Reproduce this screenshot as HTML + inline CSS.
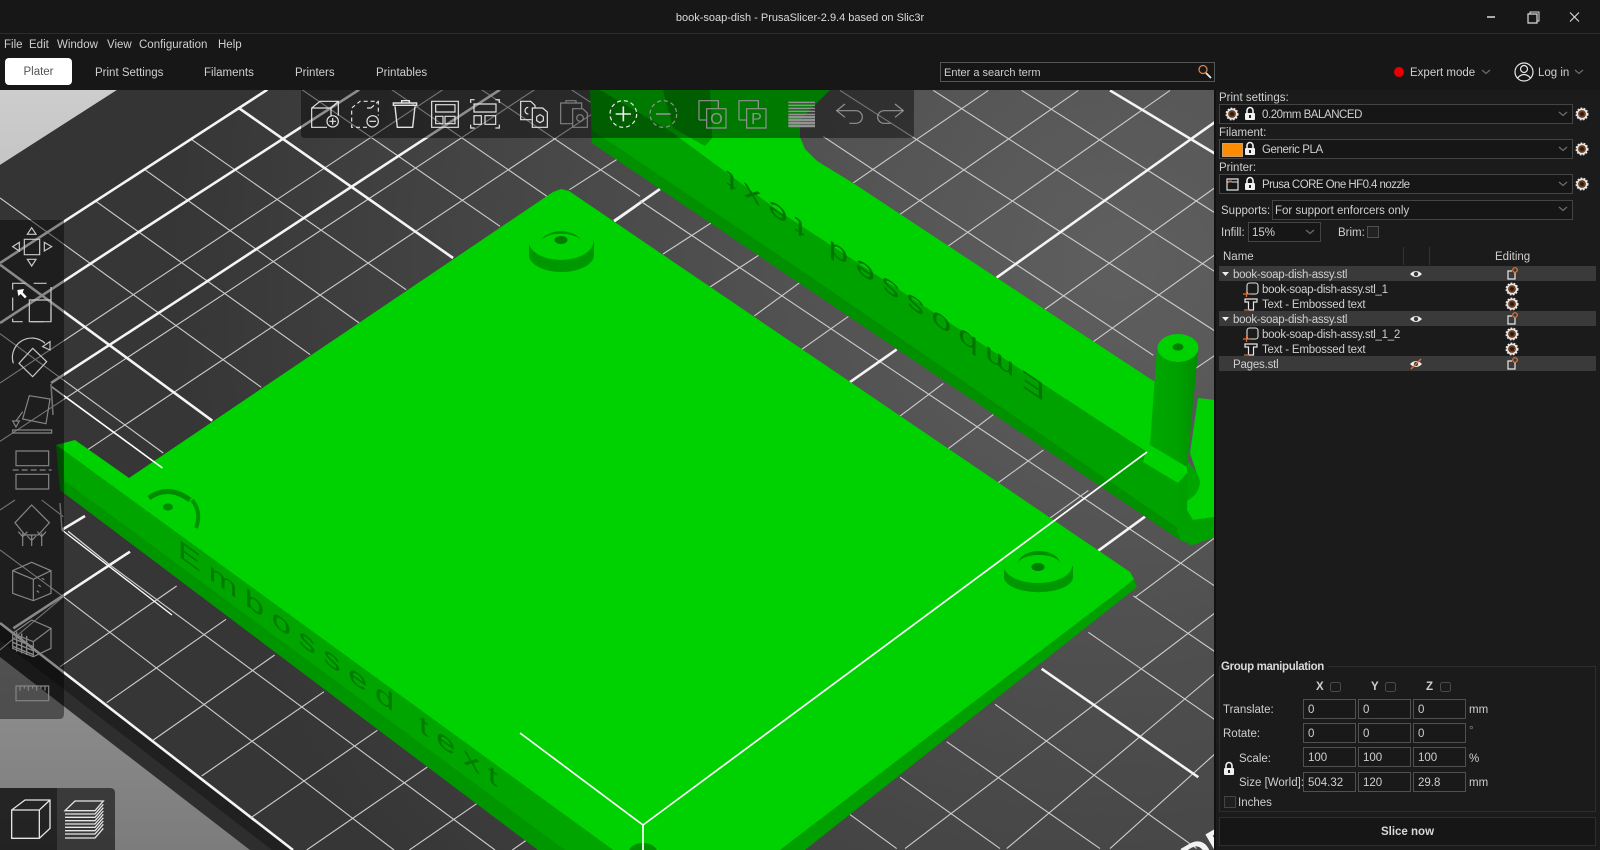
<!DOCTYPE html>
<html><head><meta charset="utf-8"><title>book-soap-dish - PrusaSlicer</title>
<style>
html,body{margin:0;padding:0;width:1600px;height:850px;overflow:hidden;background:#181818}
body{position:relative;font-family:"Liberation Sans",sans-serif;font-size:11.5px;color:#cfcfcf}
svg{position:absolute;left:0;top:0}
svg *{vector-effect:non-scaling-stroke}
.t{position:absolute;line-height:16px;white-space:nowrap;margin-top:1px}
.b{position:absolute;box-sizing:border-box}
.k{stroke:#f4f4f4;stroke-width:2.6;fill:none}
.n{stroke:#cdcdcd;stroke-width:1.1;fill:none}
.f{background:#161616;border:1px solid #444}
.v{position:absolute;box-sizing:border-box;background:#191919;border:1px solid #505050;height:20px;width:53px;line-height:20px;padding-left:4px;color:#cfcfcf}
.r{position:absolute;left:1219px;width:377px;height:15px;background:#3a3a3a}
.s{letter-spacing:-.2px}
</style></head><body>

<svg width="1600" height="850" viewBox="0 0 1600 850" style="z-index:1">
<defs>
<linearGradient id="bgg" x1="0" y1="90" x2="0" y2="850" gradientUnits="userSpaceOnUse"><stop offset="0" stop-color="#cdcdcd"/><stop offset="1" stop-color="#7c7c7c"/></linearGradient>
<radialGradient id="pg" cx="1120" cy="260" r="950" gradientUnits="userSpaceOnUse"><stop offset="0" stop-color="#5f5f5f"/><stop offset=".6" stop-color="#484848"/><stop offset="1" stop-color="#363636"/></radialGradient>
<linearGradient id="peg" x1="1150" x2="1198" y1="0" y2="0" gradientUnits="userSpaceOnUse"><stop offset="0" stop-color="#00a800"/><stop offset=".6" stop-color="#00a000"/><stop offset="1" stop-color="#008c00"/></linearGradient>
</defs>
<rect x="0" y="90" width="1215" height="760" fill="url(#bgg)"/>
<!-- bed -->
<polygon points="117,90 1215,90 1215,850 293,850 0,623 0,165" fill="url(#pg)"/>
<polygon points="117,90 268,90 0,262 0,165" fill="#343434"/>
<polygon points="0,623 293,850 250,850 0,657" fill="#2e2e2e"/>
<polygon points="0,623 293,850 272,850 0,640" fill="#202020"/>
<path d="M0 623L293 850" class="k" stroke-width="3"/>
<!-- grid left -->
<g transform="translate(0,88) scale(.40816,.33333)">
<path class="n" d="M1085 5L0 885M1310 5L0 1060M1540 5L215 1085M1568 170L1395 305M470 155L995 605M355 245L880 705M235 340L760 800M0 330L640 898M0 737L400 1095M740 5L1225 415M960 5L1340 325M1180 5L1568 325M1400 5L1568 140"/>
<path class="k" d="M655 5L0 525M880 5L690 155L340 432L0 705M1225 5L975 205L510 578L125 885M585 60L1110 510M0 530L520 998M1568 345L1505 400"/>
</g>
<path class="n" d="M663 254L711 223M710 287L759 255"/>
<path class="k" d="M614 221L660 189"/>
<!-- grid lower-left -->
<g transform="translate(0,500) scale(.33333)">
<path class="n" d="M180 500L530 258M320 608L678 358M460 720L824 465M605 828L972 575M750 955L1132 691M920 1050L1282 801M1228 1050L1430 911M1537 1050L1580 1020M190 290L1182 1050M330 195L1485 1050M0 150L190 290M0 30L45 0M125 0L190 50M205 95L330 195M0 450L190 290"/>
<path class="k" d="M40 385L390 155M185 90L255 48"/>
</g>
<!-- grid right -->
<g transform="translate(780,88) scale(.33333,.486)">
<path class="n" d="M625 5L220 195M895 5L360 260M1170 5L505 325M1305 205L795 455M1305 343L940 522M1305 550L1090 650M180 5L1305 500M460 5L1305 378M725 5L1305 257M130 100L1120 550M-77 469L60 400M65 538L205 470M360 675L490 608M505 742L640 672M655 812L790 745M810 885L925 828M-420 232L1305 1025M1305 1080L375 1565M1305 1205L680 1565M1305 1370L990 1565M1305 925L1065 1048M1060 1045L1305 1160M925 1120L1305 1300M645 1268L1250 1565M500 1345L960 1565M360 1418L660 1565M210 1495L350 1565"/>
<path class="k" d="M1305 70L650 390M990 5L1305 135M210 605L350 538M955 952L1095 882M785 1195L1255 1418"/>
</g>
<text transform="matrix(.86,-.5,.5,.86,1192,874)" font-family="Liberation Sans" font-weight="bold" font-size="40" fill="#f2f2f2">DR</text>

<!-- upper object -->
<polygon points="590,90 592,143 780,270 1180,540 1193,545 1215,537 1215,500 1187,472 1147,452 780,212 670,131 600,90" fill="#00a200"/>
<polygon points="592,130 592,143 780,270 1180,540 1178,528 780,256" fill="#009000"/>
<polygon points="600,90 830,90 800,120 800,137 805,149 817,161 853,183 997,278 1152,380 1190,400 1187,472 1147,452 1043,384 780,212 670,131" fill="#00d100"/>
<polygon points="663,90 710,90 712,138 705,146 673,128" fill="#00a000"/>
<polygon points="1215,400 1198,398 1190,453 1200,483 1188,500 1183,510 1193,520 1215,517" fill="#00d100"/>
<polygon points="1178,483 1188,472 1187,510 1193,520 1215,517 1215,537 1190,545 1177,533" fill="#00a000"/>
<path d="M1188 462Q1200 475 1200 483Q1198 495 1188 500Z" fill="#00a600"/>
<polygon points="1147,447 1188,472 1178,483 1143,462" fill="#00d100"/>
<polygon points="1157,348 1150,445 1187,467 1198,352" fill="url(#peg)"/>
<ellipse cx="1178" cy="348" rx="20.500" ry="14" fill="#00d100"/>
<ellipse cx="1178" cy="347" rx="5.500" ry="3.600" fill="#008000"/>
<text transform="matrix(-1.41,-.95,0,-1,1045,385)" font-family="Liberation Sans" font-size="25" fill="#007800" textLength="226" lengthAdjust="spacing">Embossed text</text>

<!-- main plate -->
<polygon points="1127,585 1134,579 1137,587 805,850 780,850" fill="#00a000"/>
<polygon points="63,450 60,490 538,850 613,850" fill="#00a500"/>
<polygon points="60,490 538,850 565,850 66,482" fill="#009600"/>
<polygon points="56,445 63,450 65,493 60,490" fill="#008800"/>
<polygon points="56,445 75,440 129,478 553,192 561,189 569,191 1130,572 1134,579 1127,585 780,850 613,850 63,450" fill="#00d100"/>
<text transform="matrix(1.377,.998,0,1,178,556)" font-family="Liberation Sans" font-size="25" fill="#007c00" textLength="232" lengthAdjust="spacing">Embossed text</text>

<!-- washers -->
<g>
<path d="M529 241V255A32.500 17 0 0 0 594 255V241Z" fill="#009800"/>
<ellipse cx="561" cy="241" rx="32.500" ry="19" fill="#00d100"/>
<path d="M541 240A22 15 0 0 1 581 240A22 11 0 0 0 541 240Z" fill="#009000"/>
<ellipse cx="561" cy="240" rx="6.500" ry="4" fill="#007c00"/>
<path d="M1004 566V577A34 15 0 0 0 1073 577V566Z" fill="#009800"/>
<ellipse cx="1038" cy="566" rx="34" ry="17" fill="#00d100"/>
<path d="M1018 564A21 13 0 0 1 1060 564A21 9 0 0 0 1018 564Z" fill="#009000"/>
<ellipse cx="1038" cy="567" rx="6.500" ry="4" fill="#007c00"/>
<path d="M149 498Q168 484 190 500" fill="none" stroke="#008c00" stroke-width="5"/>
<path d="M192 500Q202 512 196 528" fill="none" stroke="#009400" stroke-width="4"/>
<ellipse cx="168" cy="507" rx="5" ry="3.500" fill="#008a00"/>
<ellipse cx="643" cy="852" rx="14" ry="9" fill="#009000"/>
</g>
<!-- white axis lines -->
<g transform="translate(0,88) scale(.40816,.33333)"><path d="M125 895L398 1140" stroke="#fff" stroke-width="1.600" fill="none"/></g>
<path d="M51 384L53 415" stroke="#ccc" stroke-width="1.600"/>
<path d="M62 530L172 615" stroke="#fff" stroke-width="1.300" fill="none"/>
<path d="M68 531L110 565" stroke="#ddd" stroke-width="1" fill="none"/>
<path d="M60 503L62 530" stroke="#bbb" stroke-width="1.500" fill="none"/>
<path d="M520 733L643 825L1147 452M643 825V850" stroke="#fff" stroke-width="1.700" fill="none"/>

<!-- overlays -->
<path d="M301 90H914V134Q914 138 910 138H305Q301 138 301 134Z" fill="#000" fill-opacity=".42"/>
<path d="M0 220H64V714Q64 719 59 719H0Z" fill="#000" fill-opacity=".44"/>
<path d="M0 788H57V850H0Z" fill="#000" fill-opacity=".72"/>
<path d="M57 788H110Q115 788 115 793V850H57Z" fill="#000" fill-opacity=".55"/>

<!-- top toolbar icons -->
<g transform="translate(300,88) scale(.33333)" fill="none" stroke="#e2e2e2" stroke-width="1.200">
<path d="M81 118H35V60L60 40H115V83M35 60H93V85M93 60L115 40"/>
<circle cx="98" cy="100" r="17"/><path d="M98 90V110M88 100H108"/>
<path stroke-dasharray="4 3" d="M201 118H155V60L180 40H235V83M213 60H193M213 60L235 40"/>
<circle cx="218" cy="100" r="17"/><path d="M208 100H228"/>
<path stroke-width="1.400" d="M280 45H350V52H280ZM305 45V38H328V45M285 55L292 118H338L345 55"/>
<rect x="395" y="40" width="80" height="78"/><rect x="407" y="50" width="58" height="22"/><rect x="407" y="85" width="22" height="22"/><rect x="435" y="85" width="30" height="22"/>
<path d="M512 45V35H524M586 35H598V45M512 110V120H524M586 120H598V110"/><rect x="522" y="48" width="66" height="24"/><rect x="522" y="83" width="22" height="26"/><rect x="555" y="83" width="32" height="26"/>
<path d="M695 95H662V40H692L705 52V60"/><path d="M685 58A10 10 0 0 0 685 78"/>
<path d="M697 60H728L742 72V118H697Z"/><path d="M720 80L730 86V98L720 104L710 98V86Z"/>
<g stroke="#808080"><path d="M818 107H782V45H798V38H828V45H845V60M798 45H828"/><path d="M818 62H848L862 75V118H818Z"/><circle cx="840" cy="90" r="10"/></g>
</g>
<g transform="translate(600,88) scale(.33333)" fill="none" stroke="#ececec" stroke-width="1.200">
<circle cx="70" cy="78" r="40" stroke-dasharray="4 3"/><path d="M70 55V100M47 78H93" stroke-width="1.600"/>
<g stroke="#929292"><circle cx="190" cy="78" r="40" stroke-dasharray="4 3"/><path d="M168 78H212" stroke-width="1.600"/>
<path d="M297 96V38H355V62M320 62H378V120H320Z"/><path d="M297 96H320"/>
<path d="M417 96V38H475V62M440 62H498V120H440Z"/><path d="M417 96H440"/>
<path d="M565 43H645M565 52H645M565 61H645M565 70H645M565 79H645" stroke-width="1.500"/><path d="M565 87H645M565 96H645M565 105H645M565 114H645" stroke-width="2.600"/>
<path d="M735 48L710 68L735 88M710 68H768A19 19 0 0 1 768 106H748"/>
<path d="M885 48L910 68L885 88M910 68H852A19 19 0 0 0 852 106H872"/></g>
</g>
<text x="716.500" y="124" text-anchor="middle" font-family="Liberation Sans" font-size="16" fill="#929292">O</text>
<text x="756.500" y="124" text-anchor="middle" font-family="Liberation Sans" font-size="16" fill="#929292">P</text>

<!-- left toolbar icons -->
<g transform="translate(0,215) scale(.33333)" fill="none" stroke="#c8c8c8" stroke-width="1.200">
<rect x="73" y="73" width="46" height="46"/><path d="M82 58L95 38L108 58ZM82 133L95 153L108 133ZM58 82L38 95L58 108ZM133 82L155 95L133 108Z"/>
<rect x="38" y="205" width="115" height="115" stroke-dasharray="13 8"/><rect x="88" y="255" width="65" height="65"/>
<path d="M52 225L72 222L68 232L80 245L75 250L62 237L55 243Z" fill="#fff" stroke="none"/>
<path d="M98 400L140 440L98 485L57 445Z"/><path d="M40 445A58 58 0 0 1 135 385"/><path d="M150 380L128 395L150 405Z"/>
<g stroke="#858585"><path d="M88 542L150 552L138 626L68 612Z"/><rect x="38" y="645" width="117" height="9"/><path d="M38 618H58L48 636ZM48 618L68 590"/>
<rect x="48" y="708" width="98" height="44"/><path d="M38 765H155" stroke-dasharray="6 3"/><rect x="48" y="778" width="98" height="44"/></g>
</g>
<g transform="translate(0,500) scale(.33333)" fill="none" stroke="#858585" stroke-width="1.200">
<path d="M95 15L148 68L115 105H75L45 68ZM68 100V138M95 105V138M125 100V138M55 95L68 110L82 95M82 108L95 122L108 108M112 95L125 110L138 95"/>
<path d="M95 187L153 212V280L100 302L38 280V212ZM38 212L100 238L153 212M100 238V302"/><path d="M125 235L135 240M115 255L125 262M110 272L118 278" stroke-dasharray="3 2"/>
<path d="M95 360L153 385V445L100 470L38 445V400ZM38 400L100 425L153 385M100 425V470"/>
<path d="M38 415L100 440M38 427L100 452M38 439L100 464M50 395V455M65 400V460M80 408V465" stroke-width="1.400"/>
<rect x="48" y="558" width="98" height="44"/><path d="M60 558V572M73 558V566M85 558V572M98 558V566M110 558V572M123 558V566M135 558V572"/>
</g>
<g transform="translate(0,500) scale(.33333)" fill="none" stroke="#e6e6e6" stroke-width="1.300">
<path d="M35 930L75 900H150V985L118 1015H35ZM35 930H118V1015M118 930L150 900"/>
<path d="M195 932L225 903H310L285 932ZM195 932H285L310 903M195 942H285L310 913M195 952H285L310 923M195 962H285L310 933M195 972H285L310 943M195 982H285L310 953M195 992H285L310 963M195 1002H285L310 973M195 1014H285L310 985"/>
</g>
</svg>

<!-- Chrome -->
<div class="b" style="z-index:2;left:0;top:0;width:1600px;height:34px;background:#171717;border-bottom:1px solid #2c2c2c"></div>
<div class="b" style="z-index:2;left:0;top:34px;width:1600px;height:56px;background:#171717"></div>
<div class="b" style="z-index:2;left:1215px;top:90px;width:385px;height:760px;background:#1b1b1b"></div>
<div class="b" style="z-index:2;left:1214px;top:90px;width:2px;height:760px;background:#111"></div>

<div style="position:absolute;left:0;top:0;z-index:3;width:1600px;height:850px">
<div class="t" style="left:0;width:1600px;text-align:center;top:9px;font-size:11px;color:#dcdcdc">book-soap-dish - PrusaSlicer-2.9.4 based on Slic3r</div>
<span class="t" style="left:4px;top:36px">File</span><span class="t" style="left:29px;top:36px">Edit</span><span class="t" style="left:57px;top:36px">Window</span><span class="t" style="left:107px;top:36px">View</span><span class="t" style="left:139px;top:36px">Configuration</span><span class="t" style="left:218px;top:36px">Help</span>
<div class="b" style="left:5px;top:58px;width:67px;height:27px;background:#fff;border-radius:4px;color:#555;text-align:center;line-height:28px">Plater</div>
<span class="t" style="left:95px;top:64px">Print Settings</span><span class="t" style="left:204px;top:64px">Filaments</span><span class="t" style="left:295px;top:64px">Printers</span><span class="t" style="left:376px;top:64px">Printables</span>
<div class="b f" style="left:940px;top:62px;width:275px;height:20px;border-color:#555"></div>
<span class="t" style="left:944px;top:64px;font-size:11px">Enter a search term</span>
<span class="t" style="left:1410px;top:64px">Expert mode</span><span class="t" style="left:1538px;top:64px">Log in</span>

<span class="t" style="left:1219px;top:89px">Print settings:</span>
<div class="b f" style="left:1219px;top:104px;width:354px;height:20px"></div><span class="t" style="left:1262px;top:106px;letter-spacing:-.45px">0.20mm BALANCED</span>
<span class="t" style="left:1219px;top:124px">Filament:</span>
<div class="b f" style="left:1219px;top:139px;width:354px;height:20px"></div><span class="t" style="left:1262px;top:141px;letter-spacing:-.4px">Generic PLA</span>
<div class="b" style="left:1222px;top:143px;width:21px;height:14px;background:#ff8c00;border:1px solid #c9a070"></div>
<span class="t" style="left:1219px;top:159px">Printer:</span>
<div class="b f" style="left:1219px;top:174px;width:354px;height:20px"></div><span class="t" style="left:1262px;top:176px;letter-spacing:-.55px">Prusa CORE One HF0.4 nozzle</span>
<span class="t" style="left:1221px;top:202px">Supports:</span>
<div class="b f" style="left:1272px;top:200px;width:301px;height:20px"></div><span class="t" style="left:1275px;top:202px">For support enforcers only</span>
<span class="t" style="left:1221px;top:224px">Infill:</span>
<div class="b f" style="left:1248px;top:222px;width:73px;height:20px"></div><span class="t" style="left:1252px;top:224px">15%</span>
<span class="t" style="left:1338px;top:224px">Brim:</span>
<div class="b" style="left:1367px;top:226px;width:12px;height:12px;border:1px solid #4e4e4e;background:#222"></div>

<span class="t" style="left:1223px;top:248px">Name</span><span class="t" style="left:1495px;top:248px">Editing</span>
<div class="b" style="left:1403px;top:247px;width:1px;height:18px;background:#333"></div>
<div class="b" style="left:1429px;top:247px;width:1px;height:18px;background:#333"></div>
<div class="r" style="top:266px"></div><div class="r" style="top:311px"></div><div class="r" style="top:356px"></div>
<span class="t s" style="left:1233px;top:266px;letter-spacing:-.25px">book-soap-dish-assy.stl</span>
<span class="t s" style="left:1262px;top:281px;letter-spacing:-.28px">book-soap-dish-assy.stl_1</span>
<span class="t s" style="left:1262px;top:296px">Text - Embossed text</span>
<span class="t s" style="left:1233px;top:311px;letter-spacing:-.25px">book-soap-dish-assy.stl</span>
<span class="t s" style="left:1262px;top:326px;letter-spacing:-.28px">book-soap-dish-assy.stl_1_2</span>
<span class="t s" style="left:1262px;top:341px">Text - Embossed text</span>
<span class="t s" style="left:1233px;top:356px">Pages.stl</span>

<div class="b" style="left:1219px;top:666px;width:377px;height:146px;border:1px solid #2e2e2e"></div>
<span class="t" style="left:1221px;top:658px;font-weight:bold;background:#1b1b1b;padding-right:4px;color:#d8d8d8;letter-spacing:-.35px">Group manipulation</span>
<span class="t" style="left:1316px;top:678px;font-weight:bold">X</span><span class="t" style="left:1371px;top:678px;font-weight:bold">Y</span><span class="t" style="left:1426px;top:678px;font-weight:bold">Z</span>
<span class="t" style="left:1223px;top:701px">Translate:</span><span class="t" style="left:1223px;top:725px">Rotate:</span><span class="t" style="left:1239px;top:750px">Scale:</span><span class="t" style="left:1239px;top:774px">Size [World]:</span>
<div class="v" style="left:1303px;top:699px">0</div><div class="v" style="left:1358px;top:699px">0</div><div class="v" style="left:1413px;top:699px">0</div><span class="t" style="left:1469px;top:701px">mm</span>
<div class="v" style="left:1303px;top:723px">0</div><div class="v" style="left:1358px;top:723px">0</div><div class="v" style="left:1413px;top:723px">0</div><span class="t" style="left:1469px;top:722px;color:#888">°</span>
<div class="v" style="left:1303px;top:747px">100</div><div class="v" style="left:1358px;top:747px">100</div><div class="v" style="left:1413px;top:747px">100</div><span class="t" style="left:1469px;top:750px">%</span>
<div class="v" style="left:1303px;top:772px">504.32</div><div class="v" style="left:1358px;top:772px">120</div><div class="v" style="left:1413px;top:772px">29.8</div><span class="t" style="left:1469px;top:774px">mm</span>
<div class="b" style="left:1224px;top:796px;width:12px;height:12px;border:1px solid #444;background:#1f1f1f"></div>
<span class="t" style="left:1238px;top:794px">Inches</span>
<div class="b" style="left:1219px;top:817px;width:377px;height:29px;background:#161616;border:1px solid #2e2e2e;text-align:center;line-height:29px;font-weight:bold;color:#d8d8d8">Slice now</div>
</div>

<!-- chrome icons -->
<svg width="1600" height="850" viewBox="0 0 1600 850" style="z-index:4">
<defs>
<g id="gear"><circle r="5.500" fill="#e6e6e6"/><circle r="5.800" fill="none" stroke="#e6e6e6" stroke-width="1.400" stroke-dasharray="1.800 1.400"/><circle r="3.900" fill="#6e3d1e"/><circle r="1.900" fill="#2e1a0c"/></g>
<g id="lock"><path d="M-3 -1V-3.500A3 3 0 0 1 3 -3.500V-1" fill="none" stroke="#f0f0f0" stroke-width="1.600"/><rect x="-5" y="-1" width="10" height="7" rx="1" fill="#f0f0f0"/><rect x="-1" y="1" width="2" height="3" fill="#222"/></g>
<path id="chev" d="M-4 -2L0 1.500L4 -2" fill="none" stroke="#6e6e6e" stroke-width="1.200"/>
<g id="eye"><path d="M-6 0Q0 -6 6 0Q0 6 -6 0Z" fill="#f0f0f0"/><circle r="2.200" fill="#3a3a3a"/></g>
<g id="ed"><path d="M3 -2V5H-4V-3H0" fill="none" stroke="#e8e8e8" stroke-width="1.200"/><circle cx="3" cy="-4" r="2.300" fill="none" stroke="#e07a3a" stroke-width="1.200"/></g>
<g id="part"><rect x="-3" y="-6" width="11" height="11" rx="2.500" fill="none" stroke="#e2e2e2" stroke-width="1.100"/><path d="M-7 5H0M-3.500 2V8" stroke="#d8703a" stroke-width="1.200"/></g>
<g id="txt"><path d="M-6 -5H6V-2H2.500V6H-2.500V-2H-6Z" fill="#181818" stroke="#e8e8e8" stroke-width="1.200"/><path d="M-7 6H-2" stroke="#d8703a" stroke-width="1.200"/></g>
</defs>
<path d="M1487 17H1495" stroke="#ddd" stroke-width="1.500"/>
<rect x="1528" y="14" width="9" height="9" fill="none" stroke="#ddd" stroke-width="1.200"/><path d="M1530 14V12H1539V21H1537" fill="none" stroke="#ddd"/>
<path d="M1570 12.500L1579 21.500M1579 12.500L1570 21.500" stroke="#ddd" stroke-width="1.100"/>
<circle cx="1203" cy="69.500" r="4" fill="none" stroke="#d8814a" stroke-width="1.300"/><path d="M1206 73L1211 78" stroke="#eee" stroke-width="1.800"/>
<circle cx="1399" cy="72" r="5" fill="#e80000"/>
<use href="#chev" x="1486" y="72"/><use href="#chev" x="1579" y="72"/>
<circle cx="1524" cy="72" r="9" fill="none" stroke="#e6e6e6" stroke-width="1.200"/><circle cx="1524" cy="69" r="3.500" fill="none" stroke="#e6e6e6" stroke-width="1.200"/><path d="M1517.500 78Q1524 71 1530.500 78" fill="none" stroke="#e6e6e6" stroke-width="1.200"/>
<use href="#gear" x="1232" y="114"/><use href="#lock" x="1250" y="114"/><use href="#chev" x="1563" y="114"/><use href="#gear" x="1582" y="114"/>
<use href="#lock" x="1250" y="149"/><use href="#chev" x="1563" y="149"/><use href="#gear" x="1582" y="149"/>
<rect x="1227" y="179" width="11" height="11" fill="none" stroke="#e2e2e2" stroke-width="1.200"/><path d="M1227 182H1238" stroke="#e2e2e2"/><rect x="1229" y="180.500" width="3" height="2" fill="#e0713a"/>
<use href="#lock" x="1250" y="184"/><use href="#chev" x="1563" y="184"/><use href="#gear" x="1582" y="184"/>
<use href="#chev" x="1563" y="209"/><use href="#chev" x="1310" y="232"/>
<path d="M1222 272H1229L1225.500 276Z" fill="#eee"/><path d="M1222 317H1229L1225.500 321Z" fill="#eee"/>
<use href="#part" x="1250" y="289"/><use href="#txt" x="1251" y="304"/><use href="#part" x="1250" y="334"/><use href="#txt" x="1251" y="349"/>
<use href="#eye" x="1416" y="274"/><use href="#eye" x="1416" y="319"/><use href="#eye" x="1416" y="364"/><path d="M1411 369L1421 359" stroke="#d8703a" stroke-width="1.500"/>
<use href="#ed" x="1512" y="274"/><use href="#gear" x="1512" y="289"/><use href="#gear" x="1512" y="304"/><use href="#ed" x="1512" y="319"/><use href="#gear" x="1512" y="334"/><use href="#gear" x="1512" y="349"/><use href="#ed" x="1512" y="364"/>
<g fill="none" stroke="#4a4a4a" stroke-width="1"><rect x="1330.500" y="682.500" width="10" height="9" rx="2"/><rect x="1385.500" y="682.500" width="10" height="9" rx="2"/><rect x="1440.500" y="682.500" width="10" height="9" rx="2"/></g>
<use href="#lock" x="1229" y="769"/>
</svg>
</body></html>
